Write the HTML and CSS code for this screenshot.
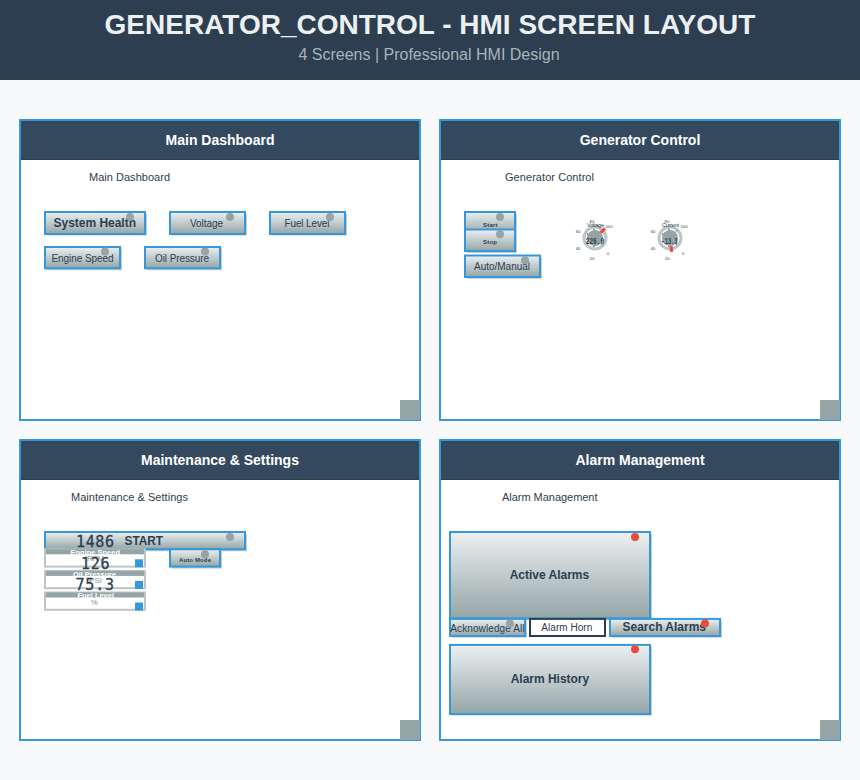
FILE: index.html
```html
<!DOCTYPE html>
<html lang="en">
<head>
<meta charset="utf-8">
<title>GENERATOR_CONTROL - HMI Screen Layout</title>
<link rel="stylesheet" href="styles.css">
</head>
<body>
<header class="page-header">
  <h1>GENERATOR_CONTROL - HMI SCREEN LAYOUT</h1>
  <p>4 Screens | Professional HMI Design</p>
</header>
<main class="screens">
  <section class="screen">
    <h2>Main Dashboard</h2>
    <svg class="canvas" viewBox="21 160 398 259">
      <defs>
        <linearGradient id="metal" x1="0" y1="0" x2="0" y2="1"><stop offset="0" stop-color="#ecf0f1"/><stop offset="1" stop-color="#95a5a6"/></linearGradient>
      </defs>
      <text class="caption" x="89" y="181" textLength="81">Main Dashboard</text>
      <rect class="shadow" x="47" y="214" width="100" height="21.6"/><rect class="btn" x="45" y="212" width="100" height="22"/>
      <text class="strong" x="53.5" y="227" textLength="82.5">System Health</text><circle class="led" cx="130" cy="217" r="4"/>
      <rect class="shadow" x="172" y="214" width="75" height="21.6"/><rect class="btn" x="170" y="212" width="75" height="22"/>
      <text class="label" x="190" y="227" textLength="33">Voltage</text><circle class="led" cx="230" cy="217" r="4"/>
      <rect class="shadow" x="272" y="214" width="75" height="21.6"/><rect class="btn" x="270" y="212" width="75" height="22"/>
      <text class="label" x="284.5" y="227" textLength="45">Fuel Level</text><circle class="led" cx="330" cy="217" r="4"/>
      <rect class="shadow" x="47" y="248.6" width="75" height="21.6"/><rect class="btn" x="45" y="247" width="75" height="21.3"/>
      <text class="label" x="51.5" y="261.7" textLength="62">Engine Speed</text><circle class="led" cx="105" cy="251.6" r="4"/>
      <rect class="shadow" x="147" y="248.6" width="75" height="21.6"/><rect class="btn" x="145" y="247" width="75" height="21.3"/>
      <text class="label" x="155" y="261.7" textLength="54">Oil Pressure</text><circle class="led" cx="205" cy="251.6" r="4"/>
      <rect class="corner" x="400" y="400" width="20" height="20"/>
    </svg>
  </section>

  <section class="screen">
    <h2>Generator Control</h2>
    <svg class="canvas" viewBox="441 160 398 259">
      <text class="caption" x="505" y="181" textLength="89">Generator Control</text>
      <rect class="shadow" x="467" y="214" width="50" height="21.6"/><rect class="btn" x="465" y="212" width="50" height="21.6"/>
      <text class="tiny" x="483" y="226.6" textLength="14.5">Start</text><circle class="led" cx="500" cy="217" r="4"/>
      <rect class="shadow" x="467" y="231.3" width="50" height="21.6"/><rect class="btn" x="465" y="229.5" width="50" height="21.6"/>
      <text class="tiny" x="483" y="244.2" textLength="14">Stop</text><circle class="led" cx="500" cy="234.3" r="4"/>
      <rect class="shadow" x="467" y="257.2" width="75" height="21.6"/><rect class="btn" x="465" y="255.5" width="75" height="21.5"/>
      <text class="label" x="474" y="270.3" textLength="56">Auto/Manual</text><circle class="led" cx="525" cy="260.2" r="4"/>

      <g id="dial">
        <circle class="ring" cx="595" cy="238" r="11"/>
        <circle class="hub" cx="595" cy="238" r="8"/>
        <path class="ticks" d="M594 228.8v1.4M594 245.8v1.4M587 233.6l1.2.8M587 242.2l1.2-.8M601 244.3l1 1M601 231.5l1-1"/>
        <text class="scale" x="589.6" y="222.6">80</text><text class="scale" x="605.5" y="228">100</text><text class="scale" x="575.7" y="232.7">60</text>
        <text class="scale" x="575.7" y="249.8">40</text><text class="scale" x="589.8" y="260">20</text><text class="scale" x="607" y="254.7">0</text>
      </g>
      <text class="dial-name" x="587" y="227.3" textLength="17">Voltage</text>
      <text class="reading" x="585.7" y="244.4" textLength="18.5" lengthAdjust="spacingAndGlyphs">226.0</text>
      <path class="needle" d="M600.7 232.6L605 228.4"/>
      <use href="#dial" x="75"/>
      <text class="dial-name" x="662" y="227.3" textLength="17">Current</text>
      <text class="reading" x="661.5" y="244.4" textLength="16" lengthAdjust="spacingAndGlyphs">-13.3</text>
      <path class="needle" d="M671.1 246.2L671.7 251.8"/>
      <rect class="corner" x="820" y="400" width="20" height="20"/>
    </svg>
  </section>

  <section class="screen">
    <h2>Maintenance &amp; Settings</h2>
    <svg class="canvas" viewBox="21 480 398 259">
      <text class="caption" x="71" y="501" textLength="117">Maintenance &amp; Settings</text>
      <rect class="shadow" x="47" y="534" width="200" height="17.3"/><rect class="btn" x="45" y="532" width="200" height="17.3"/>
      <text class="strong" x="124.5" y="545" textLength="38.5" lengthAdjust="spacingAndGlyphs">START</text><circle class="led" cx="230" cy="537" r="4"/>
      <rect class="shadow" x="172" y="551.3" width="50" height="17.3"/><rect class="btn" x="170" y="549.3" width="50" height="17.3"/>
      <text class="tiny" x="179" y="562.2" textLength="32">Auto Mode</text><circle class="led" cx="205" cy="554.3" r="4"/>

      <rect class="display" x="45" y="549.3" width="100" height="17.3"/><rect class="bar" x="46" y="549.3" width="98" height="5"/>
      <text class="display-name" x="70.5" y="555" textLength="49.5" lengthAdjust="spacingAndGlyphs">Engine Speed</text><text class="value" x="76" y="547" textLength="38">1486</text>
      <text class="unit" x="87" y="561.2" textLength="17">RPM</text><rect class="mark" x="135" y="559.3" width="8" height="8"/>
      <rect class="display" x="45" y="570.9" width="100" height="17.3"/><rect class="bar" x="46" y="570.9" width="98" height="5"/>
      <text class="display-name" x="73" y="576.6" textLength="43" lengthAdjust="spacingAndGlyphs">Oil Pressure</text><text class="value" x="81" y="568.6" textLength="28.5">126</text>
      <text class="unit" x="89" y="583.2" textLength="13">PSI</text><rect class="mark" x="135" y="580.9" width="8" height="8"/>
      <rect class="display" x="45" y="592.5" width="100" height="17.3"/><rect class="bar" x="46" y="592.5" width="98" height="5"/>
      <text class="display-name" x="77.5" y="598.2" textLength="36.5" lengthAdjust="spacingAndGlyphs">Fuel Level</text><text class="value" x="75.5" y="590.2" textLength="38.5">75.3</text>
      <text class="unit" x="90.7" y="604.8">%</text><rect class="mark" x="135" y="602.5" width="8" height="8"/>
      <rect class="corner" x="400" y="720" width="20" height="20"/>
    </svg>
  </section>

  <section class="screen">
    <h2>Alarm Management</h2>
    <svg class="canvas" viewBox="441 480 398 259">
      <text class="caption" x="502" y="501" textLength="95.5">Alarm Management</text>
      <rect class="shadow" x="452" y="534" width="200" height="86.4"/><rect class="btn" x="450" y="532" width="200" height="86.4"/>
      <text class="strong" x="509.7" y="579.3" textLength="79.5">Active Alarms</text><circle class="led alert" cx="635" cy="537" r="4"/>
      <rect class="shadow" x="452" y="620.4" width="75" height="17.3"/><rect class="btn" x="450" y="618.9" width="75" height="17.1"/>
      <text class="label" x="450.3" y="631.5" textLength="74.2">Acknowledge All</text><circle class="led" cx="510" cy="623.4" r="4"/>
      <rect class="horn" x="530" y="618.9" width="75" height="17.1"/>
      <text class="label" x="541.3" y="630.5" textLength="51">Alarm Horn</text>
      <rect class="shadow" x="612" y="620.4" width="110" height="17.3"/><rect class="btn" x="610" y="618.9" width="110" height="17.1"/>
      <text class="strong" x="622.5" y="631.3" textLength="83.5">Search Alarms</text><circle class="led alert" cx="705" cy="623.4" r="4"/>
      <rect class="shadow" x="452" y="646.3" width="200" height="69.3"/><rect class="btn" x="450" y="644.9" width="200" height="69.1"/>
      <text class="strong" x="510.7" y="683.2" textLength="78.5">Alarm History</text><circle class="led alert" cx="635" cy="649.3" r="4"/>
      <rect class="corner" x="820" y="720" width="20" height="20"/>
    </svg>
  </section>
</main>
</body>
</html>
```
FILE: styles.css
```css
* { box-sizing: border-box; }
body { margin: 0; background: #f8f9fb; color: #2c3e50; font-family: "Liberation Sans", Arial, sans-serif; height: 780px; overflow: hidden; }

.page-header { height: 80px; padding-top: 9px; background: #2c3e50; text-align: center; }
.page-header h1 { margin: 0; font-size: 28px; line-height: 32px; color: #ecf0f1; white-space: nowrap; }
.page-header p { margin: 4px 2px 0 0; font-size: 16px; line-height: 20px; color: #aab3b9; }

.screens { display: grid; grid-template-columns: 402px 402px; grid-template-rows: 302px 302px; gap: 18px; padding: 39px 19px; }
.screen { border: 2px solid #3498db; background: #fff; }
.screen h2 { margin: 0; height: 39px; font-size: 14px; line-height: 38px; text-align: center; color: #fff; background: #34495e; border-bottom: 1px solid #2c3e50; }
.canvas { display: block; width: 398px; height: 259px; overflow: visible; }

.caption { font-size: 11px; fill: #2c3e50; }
.strong { font-size: 12px; font-weight: bold; fill: #2c3e50; }
.label { font-size: 10px; fill: #2c3e50; }
.tiny { font-size: 6px; font-weight: bold; fill: #2c3e50; }
.shadow { fill: #c8cdd0; }
.btn { fill: url(#metal); stroke: #3498db; stroke-width: 2; }
.horn { fill: #fff; stroke: #2c3e50; stroke-width: 2; }
.led { fill: #95a5a6; }
.led.alert { fill: #e74c3c; }
.corner { fill: #95a5a6; }

.ring { fill: #fff; stroke: #bdc3c7; stroke-width: 3; }
.hub { fill: #95a5a6; }
.ticks { fill: none; stroke: #2c3e50; stroke-width: 1; }
.scale { font-size: 4.2px; fill: #2c3e50; }
.dial-name { font-size: 5.5px; fill: #2c3e50; }
.reading { font: bold 9.5px "Liberation Mono", monospace; fill: #2c3e50; }
.needle { stroke: #e74c3c; stroke-width: 3.2; }

.display { fill: #fff; stroke: #bdc3c7; stroke-width: 2; }
.bar { fill: #95a5a6; }
.display-name { font-size: 7.8px; font-weight: bold; fill: #fff; }
.value { font: 15px "DejaVu Sans Mono", monospace; fill: #2c3e50; stroke: #2c3e50; stroke-width: .3; }
.unit { font-size: 7.8px; fill: #7f8f91; }
.mark { fill: #3498db; }
```
